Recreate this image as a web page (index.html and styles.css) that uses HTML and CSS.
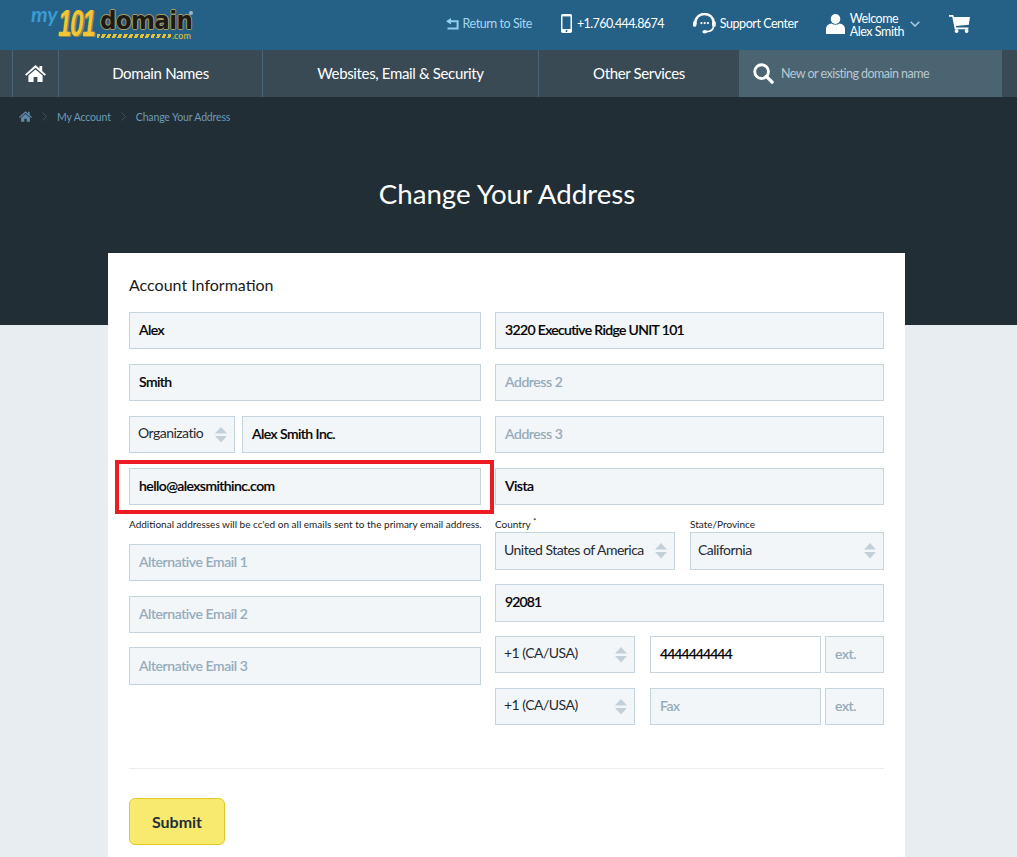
FILE: index.html
```html
<!DOCTYPE html>
<html lang="en">
<head>
<meta charset="utf-8">
<title>Change Your Address</title>
<link rel="stylesheet" href="styles.css">
</head>
<body>
<header class="topbar">
  <div class="logo">
    <span class="logo-my">my</span><span class="logo-101">101</span>
    <span class="logo-domain-wrap">
      <span class="logo-domain">domain</span>
      <span class="logo-sub"><span class="stripes"></span><span class="logo-com">.com</span></span>
    </span>
    <span class="logo-reg"></span>
  </div>
  <div class="top-links">
    <a class="tl tl-return">
      <svg class="ic-return" viewBox="0 0 13 12" width="13" height="12"><path d="M5 0 L0 3.2 L5 6.4 V4.3 H10.6 V9.6 H1.5 V11.6 H12.6 V2.3 H5 Z" fill="#8fd0f0"/></svg>
      <span>Return to Site</span>
    </a>
    <a class="tl tl-phone">
      <svg viewBox="0 0 11 19" width="11" height="19"><rect x="0" y="0" width="11" height="19" rx="1.8" fill="#fff"/><rect x="1.5" y="2.4" width="8" height="12.6" fill="#256186"/><circle cx="5.5" cy="17" r="1" fill="#256186"/></svg>
      <span>+1.760.444.8674</span>
    </a>
    <a class="tl tl-support">
      <svg viewBox="0 0 24 22" width="23" height="21"><path d="M2.5 12 V9.5 A9.5 8.5 0 0 1 21.5 9.5 V13" fill="none" stroke="#fff" stroke-width="2.6"/><rect x="0" y="8.5" width="3.4" height="6" rx="1.6" fill="#fff"/><rect x="20" y="8.5" width="3.8" height="6" rx="1.6" fill="#fff"/><path d="M21.5 14 Q21 19.3 14 19.6" fill="none" stroke="#fff" stroke-width="1.8"/><ellipse cx="12.3" cy="19.7" rx="2.6" ry="1.8" fill="#fff"/><circle cx="8.8" cy="10.5" r="1.2" fill="#fff"/><circle cx="12.2" cy="10.5" r="1.2" fill="#fff"/><circle cx="15.6" cy="10.5" r="1.2" fill="#fff"/></svg>
      <span>Support Center</span>
    </a>
    <a class="tl tl-user">
      <svg viewBox="0 0 19 20" width="19" height="20"><ellipse cx="9.5" cy="5" rx="4.8" ry="5" fill="#fff"/><path d="M0 20 V15 C0 11.5 3 10.2 5.5 9.6 C7.5 11.2 11.5 11.2 13.5 9.6 C16 10.2 19 11.5 19 15 V20 Q9.5 20.6 0 20 Z" fill="#fff"/></svg>
      <span class="welcome">Welcome<br>Alex Smith</span>
      <svg class="chev" viewBox="0 0 10 6" width="10" height="6"><path d="M.7.7 5 5 9.3.7" fill="none" stroke="#a9cfe6" stroke-width="1.5"/></svg>
    </a>
    <a class="tl tl-cart">
      <svg viewBox="0 0 21 18" width="21" height="18"><path d="M0 0 H4.2 L4.9 2 H21 L19.8 9.8 L6.9 11 L7.2 12.6 H19.4 V14.2 H5.8 L3.2 1.7 H0 Z" fill="#fff"/><circle cx="7.6" cy="16" r="1.9" fill="#fff"/><circle cx="17.6" cy="16" r="1.9" fill="#fff"/></svg>
    </a>
  </div>
</header>

<nav class="mainnav">
  <div class="nav-edge"></div>
  <a class="nav-home">
    <svg viewBox="0 0 21 17" width="21" height="17"><path d="M10.5 0 L14.5 3.6 V1 H17.2 V6 L21 9.4 L19.7 10.8 L10.5 2.8 L1.3 10.8 L0 9.4 Z M3.4 10.6 L10.5 4.5 L17.6 10.6 V17 H12.4 V12 H8.6 V17 H3.4 Z" fill="#fff"/></svg>
  </a>
  <a class="nav-item nav-dn">Domain Names</a>
  <a class="nav-item nav-web">Websites, Email &amp; Security</a>
  <a class="nav-item nav-other">Other Services</a>
  <div class="nav-search">
    <svg viewBox="0 0 22 22" width="21" height="21"><circle cx="9" cy="9" r="7.2" fill="none" stroke="#fff" stroke-width="3"/><path d="M14 14 L20 20" stroke="#fff" stroke-width="3.6" stroke-linecap="round"/></svg>
    <span>New or existing domain name</span>
  </div>
</nav>

<section class="hero">
  <div class="crumbs">
    <svg viewBox="0 0 21 17" width="13" height="11"><path d="M10.5 0 L14.5 3.6 V1 H17.2 V6 L21 9.4 L19.7 10.8 L10.5 2.8 L1.3 10.8 L0 9.4 Z M3.4 10.6 L10.5 4.5 L17.6 10.6 V17 H12.4 V12 H8.6 V17 H3.4 Z" fill="#5f8aa6"/></svg>
    <svg class="sep" viewBox="0 0 5 9" width="5" height="9"><path d="M.5.5 4.5 4.5 .5 8.5" fill="none" stroke="#3d4f5a" stroke-width="1"/></svg>
    <span>My Account</span>
    <svg class="sep" viewBox="0 0 5 9" width="5" height="9"><path d="M.5.5 4.5 4.5 .5 8.5" fill="none" stroke="#3d4f5a" stroke-width="1"/></svg>
    <span>Change Your Address</span>
  </div>
  <h1>Change Your Address</h1>
</section>

<main class="page">
  <div class="card">
    <h2>Account Information</h2>
    <div class="cols">
      <div class="col col-left">
        <div class="field val">Alex</div>
        <div class="field val">Smith</div>
        <div class="row org">
          <div class="field sel org-sel"><span>Organizatio</span><svg class="updown" viewBox="0 0 12 16" width="12" height="16"><path d="M6 0 12 6.5H0Z M0 9H12L6 15.5Z" fill="#c4d0d8"/></svg></div>
          <div class="field val grow">Alex Smith Inc.</div>
        </div>
        <div class="email-block">
          <div class="field val highlight-target">hello@alexsmithinc.com</div>
          <div class="redbox"></div>
          <p class="note">Additional addresses will be cc'ed on all emails sent to the primary email address.</p>
        </div>
        <div class="field ph">Alternative Email 1</div>
        <div class="field ph">Alternative Email 2</div>
        <div class="field ph tall alt3">Alternative Email 3</div>
      </div>
      <div class="col col-right">
        <div class="field val addr1">3220 Executive Ridge UNIT 101</div>
        <div class="field ph">Address 2</div>
        <div class="field ph">Address 3</div>
        <div class="field val">Vista</div>
        <div class="row place">
          <label class="lab country"><span class="lab-text">Country <sup>*</sup></span>
            <div class="field sel tall sel-strong"><span>United States of America</span><svg class="updown" viewBox="0 0 12 16" width="12" height="16"><path d="M6 0 12 6.5H0Z M0 9H12L6 15.5Z" fill="#c4d0d8"/></svg></div>
          </label>
          <label class="lab state"><span class="lab-text">State/Province</span>
            <div class="field sel tall sel-state"><span>California</span><svg class="updown" viewBox="0 0 12 16" width="12" height="16"><path d="M6 0 12 6.5H0Z M0 9H12L6 15.5Z" fill="#c4d0d8"/></svg></div>
          </label>
        </div>
        <div class="field val tall zip">92081</div>
        <div class="row phone">
          <div class="field sel cc"><span>+1 (CA/USA)</span><svg class="updown" viewBox="0 0 12 16" width="12" height="16"><path d="M6 0 12 6.5H0Z M0 9H12L6 15.5Z" fill="#c4d0d8"/></svg></div>
          <div class="field val num white">4444444444</div>
          <div class="field ph ext">ext.</div>
        </div>
        <div class="row phone">
          <div class="field sel cc"><span>+1 (CA/USA)</span><svg class="updown" viewBox="0 0 12 16" width="12" height="16"><path d="M6 0 12 6.5H0Z M0 9H12L6 15.5Z" fill="#c4d0d8"/></svg></div>
          <div class="field ph num">Fax</div>
          <div class="field ph ext">ext.</div>
        </div>
      </div>
    </div>
    <hr class="rule">
    <button class="submit" type="button">Submit</button>
  </div>
</main>
</body>
</html>
```
FILE: styles.css
```css
* { box-sizing: border-box; }
html, body { margin: 0; height: 857px; overflow: hidden; }
body { background: #e8edf2; font-family: Lato, "Liberation Sans", sans-serif; color: #111; }
a { color: inherit; text-decoration: none; }

.topbar { height: 50px; background: #256186; display: flex; justify-content: space-between; align-items: center; }
.logo { position: relative; width: 200px; height: 50px; margin-left: 31px; display: flex; }
.logo-my { position: absolute; left: 0; top: 3px; font: italic 700 21px/22px Lato, sans-serif; color: #3a9bd3; }
.logo-101 { position: absolute; left: 27px; top: 5px; font: italic 700 37px/37px "Liberation Sans", sans-serif; color: #f2c531; letter-spacing: -2px; transform: scaleX(.65); transform-origin: left center; text-shadow: 1px 1px 0 #8f8650, 2px 1px 0 #8f8650; }
.logo-domain-wrap { position: absolute; left: 66px; top: 9px; width: 128px; }
.logo-domain { display: block; margin-left: 3px; font: 700 25px/23px "DejaVu Sans", sans-serif; color: #1e1a16; letter-spacing: -.7px; transform: scaleX(.92); transform-origin: left center; text-shadow: 1px 0 0 #a89f66, -1px 0 0 #a89f66, 0 1px 0 #a89f66, 0 -1px 0 #a89f66; }
.logo-sub { display: flex; align-items: center; height: 7px; margin-top: 0; }
.stripes { width: 74px; height: 4px; background: repeating-linear-gradient(115deg, #e6c23a 0 3px, transparent 3px 5px); }
.logo-com { font: 400 9px/7px Lato, sans-serif; color: #e6c23a; margin-left: 1px; }
.logo-reg { position: absolute; left: 158px; top: 11px; width: 4px; height: 4px; border-radius: 50%; background: #9fb6c4; }

.top-links { display: flex; align-items: center; color: #fff; font-size: 12.5px; letter-spacing: -.45px; padding-bottom: 3px; }
.tl { display: flex; align-items: center; }
.tl-return { color: #a6d6f0; gap: 4px; margin-right: 29px; }
.tl-phone { gap: 5px; margin-right: 29px; letter-spacing: -.6px; }
.tl-support { gap: 4px; margin-right: 28px; }
.tl-user { gap: 5px; margin-right: 29px; }
.welcome { line-height: 13px; margin-top: 2px; }
.chev { margin-left: 1px; }
.tl-cart { margin-right: 47px; }

.mainnav { height: 47px; background: #394a55; display: flex; color: #fff; font-size: 15px; letter-spacing: -.35px; }
.nav-edge { width: 13px; border-right: 1px solid #4a6577; }
.nav-home { width: 46px; display: flex; align-items: center; justify-content: center; border-right: 1px solid #4a6577; }
.nav-item { display: flex; align-items: center; justify-content: center; border-right: 1px solid #4a6577; padding-bottom: 2px; }
.nav-dn { width: 204px; }
.nav-web { width: 276px; }
.nav-other { width: 200px; border-right: 0; }
.nav-search { width: 263px; background: #4b6472; display: flex; align-items: center; gap: 7px; padding-left: 14px; font-size: 12.5px; letter-spacing: -.53px; color: #b9c8d1; }

.hero { height: 228px; background: #212e35; color: #fff; text-align: center; }
.crumbs { display: flex; align-items: center; gap: 10px; height: 41px; padding: 0 0 2px 19px; font-size: 10.5px; color: #6d9bb8; letter-spacing: -.15px; }
h1 { margin: 0; padding: 40px 3px 0 0; font-size: 27.7px; line-height: 32px; font-weight: 400; }

.page { margin: -72px 112px 0 108px; position: relative; }
.card { background: #fff; width: 797px; height: 640px; padding: 21px; }
h2 { margin: 0 0 16px; font-size: 16px; line-height: 22px; font-weight: 400; color: #1a1a1a; }
.cols { display: flex; gap: 14px; }
.col { display: flex; flex-direction: column; gap: 15px; }
.col-left { width: 352px; }
.col-right { width: 389px; }
.row { display: flex; }

.field { height: 37px; background: #f3f6f9; border: 1px solid #c6d4de; display: flex; align-items: center; padding: 0 9px 2px; font-size: 14px; white-space: nowrap; }
.tall { height: 38px; }
.val { font-weight: 500; color: #000; letter-spacing: -.55px; -webkit-text-stroke: .2px #000; }
.addr1 { letter-spacing: -.66px; }
.ph { color: #95abbb; font-weight: 500; letter-spacing: -.42px; -webkit-text-stroke: .15px #95abbb; }
.grow { flex: 1; }
.sel { justify-content: space-between; color: #1f2b33; letter-spacing: -.52px; }
.sel span { margin-top: -2px; }
.updown { flex: none; margin-top: 2px; }

.org { gap: 7px; }
.org-sel { width: 106px; padding: 0 7px 2px 8px; }
.email-block { position: relative; height: 61px; }
.redbox { position: absolute; left: -14px; top: -8px; width: 379px; height: 54px; border: 4px solid #ed1c24; }
.note { margin: 13px 0 0; font-size: 10px; line-height: 12px; color: #1a1a1a; white-space: nowrap; }
.alt3 { margin-top: -1px; }

.place { gap: 15px; }
.lab { display: flex; flex-direction: column; }
.lab-text { font-size: 10px; line-height: 8px; height: 12px; color: #222; }
.lab-text sup { font-size: 8px; line-height: 0; }
.country { width: 180px; }
.state { width: 194px; }
.sel-strong { padding: 0 7px 2px 8px; }
.sel-state { padding: 0 7px 2px 7px; }
.zip { margin-top: -1px; letter-spacing: -.9px; padding-bottom: 4px; }
.phone { margin-top: -1px; }
.phone + .phone { margin-top: 0; }
.cc { width: 140px; padding: 0 7px 2px 8px; }
.num { width: 171px; margin-left: 15px; }
.white { background: #fff; letter-spacing: -.95px; }
.ext { width: 59px; margin-left: 4px; }

.rule { border: 0; height: 1px; background: #e8edf2; margin: 43px 0 29px; width: 755px; }
.submit { display: block; width: 96px; height: 47px; background: #f8ea6e; border: 1px solid #e3c826; border-radius: 6px; font: 700 16px Lato, sans-serif; color: #23303a; padding: 0; }
```
